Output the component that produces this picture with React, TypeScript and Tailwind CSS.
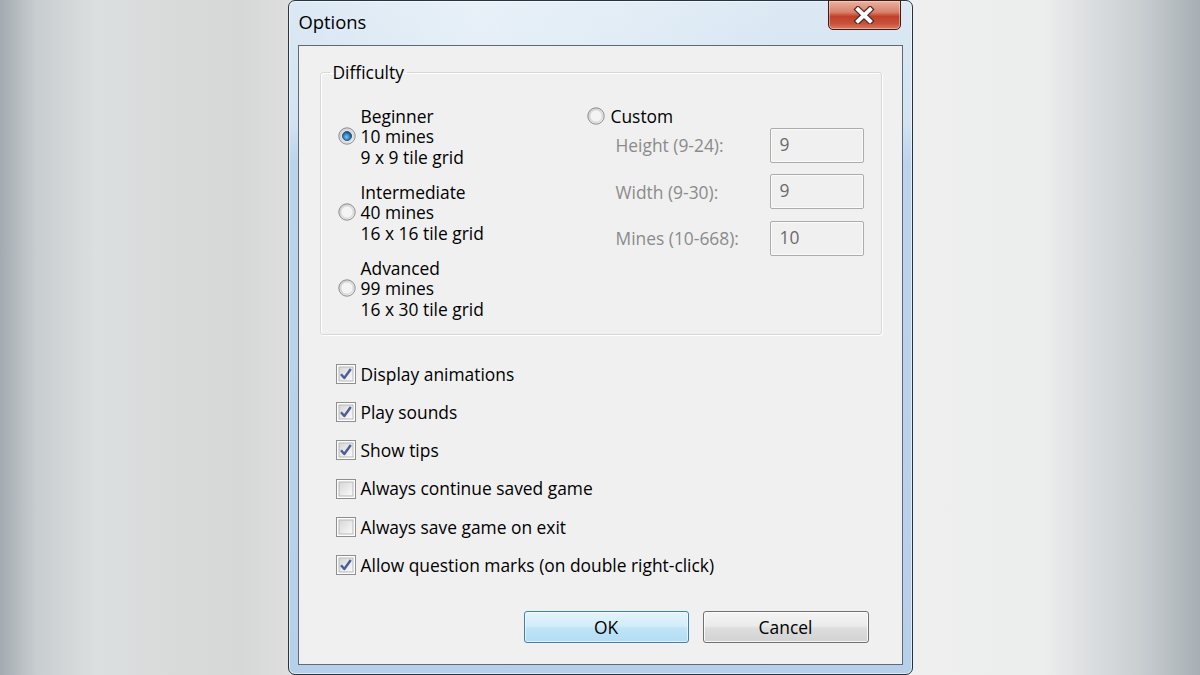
import React from 'react';

// Minesweeper (Win7) options dialog
const font = { fontFamily: '"Open Sans", "Noto Sans", sans-serif' };

const Radio: React.FC<{ checked?: boolean }> = ({ checked }) => (
  <svg width="18" height="18" viewBox="0 0 18 18" className="shrink-0">
    <defs>
      <linearGradient id="rOuter" x1="0" y1="0" x2="1" y2="1">
        <stop offset="0" stopColor="#c9c9c9" />
        <stop offset="1" stopColor="#f6f6f6" />
      </linearGradient>
      <radialGradient id="rDot" cx="0.45" cy="0.6" r="0.6">
        <stop offset="0" stopColor="#7fc4ef" />
        <stop offset="0.55" stopColor="#2f84c2" />
        <stop offset="1" stopColor="#12406a" />
      </radialGradient>
    </defs>
    <circle cx="9" cy="9" r="8.2" fill="url(#rOuter)" stroke="#8c8e90" strokeWidth="1" />
    <circle cx="9" cy="9" r="6.2" fill="#f4f4f4" stroke="#d3d3d3" strokeWidth="1" />
    {checked && <circle cx="9" cy="9" r="4.6" fill="url(#rDot)" stroke="#1d4a70" strokeWidth="0.8" />}
  </svg>
);

const Checkbox: React.FC<{ checked?: boolean }> = ({ checked }) => (
  <svg width="20" height="20" viewBox="0 0 20 20" className="shrink-0">
    <defs>
      <linearGradient id="cInner" x1="0" y1="0" x2="1" y2="1">
        <stop offset="0" stopColor="#d6d6d6" />
        <stop offset="1" stopColor="#fbfbfb" />
      </linearGradient>
    </defs>
    <rect x="0.5" y="0.5" width="19" height="19" fill="#fdfdfd" stroke="#8e8f8f" />
    <rect x="3" y="3" width="14" height="14" fill="url(#cInner)" stroke="#b9b9b9" strokeWidth="1" />
    {checked && (
      <path
        d="M5 10.2 L8.3 14 L14.8 5"
        fill="none"
        stroke="#4a5d98"
        strokeWidth="2.4"
        strokeLinejoin="round"
      />
    )}
  </svg>
);

const difficulties = [
  { name: 'Beginner', mines: '10 mines', grid: '9 x 9 tile grid', checked: true },
  { name: 'Intermediate', mines: '40 mines', grid: '16 x 16 tile grid' },
  { name: 'Advanced', mines: '99 mines', grid: '16 x 30 tile grid' },
];

const customFields = [
  { label: 'Height (9-24):', value: '9' },
  { label: 'Width (9-30):', value: '9' },
  { label: 'Mines (10-668):', value: '10' },
];

const options = [
  { label: 'Display animations', checked: true },
  { label: 'Play sounds', checked: true },
  { label: 'Show tips', checked: true },
  { label: 'Always continue saved game' },
  { label: 'Always save game on exit' },
  { label: 'Allow question marks (on double right-click)', checked: true },
];

const App: React.FC = () => {
  return (
    <div
      className="w-full h-[675px] overflow-hidden flex justify-center bg-[linear-gradient(to_right,#a3abb0_0%,#c8cdd0_3%,#dcdfdf_8%,#d6d7d7_20%,#dddedd_24%,#e9eaea_60%,#efefef_75%,#eceded_87%,#c9ced1_95%,#a7afb4_100%)] text-[17.4px] leading-[20.5px] text-black"
      style={font}
    >
      <div className="w-[625px] h-[675px] flex flex-col rounded-[7px] border border-[#27343f] bg-[linear-gradient(to_bottom,#dce9f4_0%,#d3e3f1_18%,#bcd4eb_24%,#b7d0e9_100%)] shadow-[inset_0_0_0_1px_rgba(255,255,255,0.55)] px-[9px] pb-[9px]">
        {/* title bar */}
        <div className="h-[44px] flex justify-between items-start -mx-[9px] px-[10px] bg-[linear-gradient(to_right,rgba(255,255,255,0)_0%,rgba(255,255,255,0.35)_30%,rgba(255,255,255,0.2)_55%,rgba(255,255,255,0)_80%)]">
          <div className="pt-[11px] text-[18.4px] text-black">Options</div>
          <div className="-mt-px mr-px w-[73px] h-[30px] rounded-b-[5px] border border-[#3f1a14] bg-[linear-gradient(to_bottom,#eab3a2_0%,#d9806a_40%,#c0412a_55%,#c8503a_80%,#dc7a60_100%)] shadow-[inset_0_0_0_1px_rgba(255,230,220,0.45)] flex items-center justify-center">
            <svg width="22" height="18" viewBox="0 0 22 18">
              <path d="M5 3.5 L17 15 M17 3.5 L5 15" stroke="#4a2a24" strokeWidth="6.4" strokeLinecap="square" />
              <path d="M5 3.5 L17 15 M17 3.5 L5 15" stroke="#ffffff" strokeWidth="4" strokeLinecap="square" />
            </svg>
          </div>
        </div>

        {/* client area */}
        <div className="flex-1 border border-[#5e6a75] bg-[#f0f0f0] px-[21px] flex flex-col">
          <fieldset className="mt-[16px] h-[273px] border border-[#d6d9dc] rounded-[3px] shadow-[inset_1px_1px_0_#ffffff,1px_1px_0_#ffffff] px-[17px] flex">
            <legend className="-ml-[8px] px-[3px]">Difficulty</legend>
            <div className="w-[249px] pt-[23px] flex flex-col gap-[14.5px]">
              {difficulties.map((d) => (
                <div key={d.name} className="flex items-center gap-[5px]">
                  <Radio checked={d.checked} />
                  <div className="flex flex-col">
                    <span>{d.name}</span>
                    <span>{d.mines}</span>
                    <span>{d.grid}</span>
                  </div>
                </div>
              ))}
            </div>
            <div className="flex-1 pt-[23px] flex flex-col">
              <div className="flex items-center gap-[6px]">
                <Radio />
                <span>Custom</span>
              </div>
              <div className="mt-[1.5px] flex flex-col gap-[11.5px]">
                {customFields.map((f) => (
                  <div key={f.label} className="flex items-center">
                    <span className="w-[154px] ml-[29px] pt-[1px] text-[#8b8b8b]">{f.label}</span>
                    <div className="w-[94px] h-[35px] border border-[#acacac] rounded-[2px] bg-[#f0f0f0] shadow-[inset_0_0_0_1px_#fafafa] px-[9px] pt-[5px] text-[#6a6a6a]">
                      {f.value}
                    </div>
                  </div>
                ))}
              </div>
            </div>
          </fieldset>

          <div className="mt-[20px] pl-[16px] flex flex-col">
            {options.map((o) => (
              <div key={o.label} className="h-[38.2px] flex items-center gap-[5px]">
                <Checkbox checked={o.checked} />
                <span>{o.label}</span>
              </div>
            ))}
          </div>

          <div className="mt-[27px] flex justify-end gap-[14px] pr-[12px]">
            <button className="w-[165px] h-[32px] rounded-[3px] border border-[#3d80b3] bg-[linear-gradient(to_bottom,#e4f4fc_0%,#d3edfa_45%,#bfe4f7_55%,#b2ddf3_100%)] shadow-[inset_0_0_0_1px_rgba(255,255,255,0.6)] text-black">
              OK
            </button>
            <button className="w-[166px] h-[32px] rounded-[3px] border border-[#707070] bg-[linear-gradient(to_bottom,#f4f4f4_0%,#ebebeb_45%,#dddddd_55%,#d2d2d2_100%)] shadow-[inset_0_0_0_1px_rgba(255,255,255,0.8)] text-black">
              Cancel
            </button>
          </div>
        </div>
      </div>
    </div>
  );
};

export default App;
